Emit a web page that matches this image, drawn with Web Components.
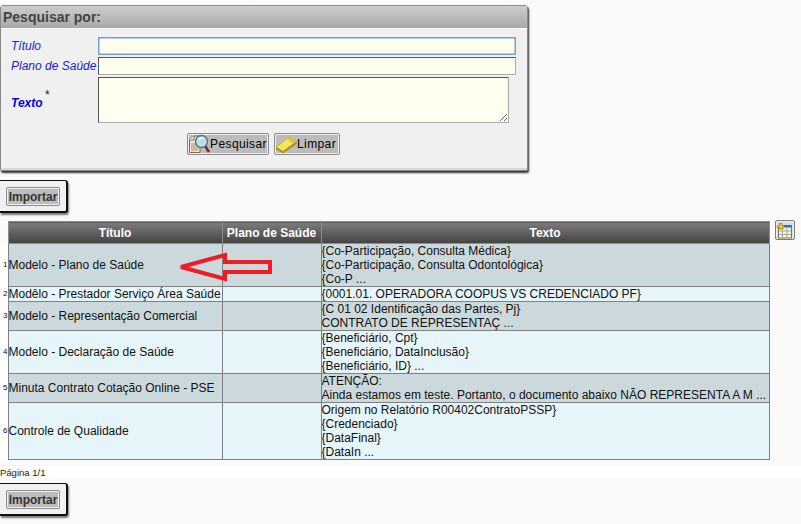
<!DOCTYPE html>
<html lang="pt-BR">
<head>
<meta charset="utf-8">
<title>Pesquisar</title>
<style>
    html, body { margin: 0; background: #fafafa; }
    body { font-family: "Liberation Sans", Arial, sans-serif; font-size: 12px; color: #111; padding-top: 5px; height: 519px; overflow: hidden; }
</style>
</head>
<body>
<search-panel></search-panel>
<import-bar></import-bar>
<results-table></results-table>
<page-info>Página 1/1</page-info>
<import-bar compact></import-bar>

<script>
const ICONS = {
    search: `<svg width="22" height="20" viewBox="0 0 22 20">
        <path d="M1.5 6 L6 2 L12 2 L12 18.5 L1.5 18.5 Z" fill="#f6e8cc" stroke="#7d6a4c"/>
        <path d="M1.5 6 H6 V2" fill="#fff" stroke="#7d6a4c"/>
        <path d="M3 10h8M3 12h8M3 14h8M3 16h7" stroke="#9c8a6c"/>
        <circle cx="13.5" cy="7.5" r="6" fill="#bcdde8" stroke="#587480" stroke-width="1.5"/>
        <path d="M10 6 q2-3 6-2" stroke="#fff" fill="none" stroke-width="1.5"/>
        <path d="M17.5 12.5 L21 18" stroke="#702a1c" stroke-width="2.5"/>
    </svg>`,
    eraser: `<svg width="22" height="20" viewBox="0 0 22 20">
        <path d="M1 13 L15 2.5 L21.5 7.5 L8 17.5 Z" fill="#f7e65a" stroke="#c9ab30"/>
        <path d="M15 2.5 L21.5 7.5 L18 10 L12 5 Z" fill="#d8c24a"/>
        <path d="M1 13 L8 17.5 L21.5 7.5 L21.5 10 L8 19.5 L1 15 Z" fill="#a98f22"/>
    </svg>`,
    columns: `<svg width="17" height="17" viewBox="0 0 17 17">
        <rect x="2.5" y="3.5" width="13" height="12.5" fill="#fbf6e4" stroke="#77735f"/>
        <rect x="8" y="3" width="7" height="2.5" fill="#1d74d2"/>
        <path d="M3 9h12M3 12.5h12M6.5 6v10M11 6v10" stroke="#a8a58f"/>
        <path d="M1.5 3.5 h2 v-2 h2.5 v2 h2 v2 h-1.5 v1.5 h-3 v-1.5 h-2.5 Z" fill="#f0c63a" stroke="#a87f14" stroke-width=".8"/>
    </svg>`
};

class IconButton extends HTMLElement {
    constructor() {
        super();
        this.attachShadow({ mode: 'open' });
        const icon = ICONS[this.getAttribute('icon')] || '';
        const width = this.getAttribute('width');
        this.shadowRoot.innerHTML = `
            <style>
                :host { display: inline-flex; }
                button {
                    display: flex;
                    align-items: center;
                    box-sizing: border-box;
                    width: ${width}px;
                    height: 22px;
                    margin: 0;
                    padding: 0;
                    background: #bcbcbc;
                    border: 1px solid #8c8c8c;
                    border-radius: 2px;
                    box-shadow: inset 0 0 0 1px #efefef;
                    font: 12px "Liberation Sans", Arial, sans-serif;
                    letter-spacing: .4px;
                    color: #000;
                }
                svg { display: block; flex: none; }
            </style>
            <button type="button">${icon}<slot></slot></button>
        `;
    }
}

class SearchPanel extends HTMLElement {
    constructor() {
        super();
        this.attachShadow({ mode: 'open' });
        this.shadowRoot.innerHTML = `
            <style>
                :host {
                    display: block;
                    width: 526px;
                    border: 1px solid #8a8a8a;
                    border-radius: 3px 3px 2px 2px;
                    box-shadow: 1px 2px 2px #333;
                    background: #f0f0f0;
                    font-family: "Liberation Sans", Arial, sans-serif;
                }
                h3 {
                    margin: 0;
                    height: 22px;
                    padding: 0 2px;
                    font-size: 14px;
                    line-height: 22px;
                    color: #444;
                    background: linear-gradient(#cdcdcd, #a8a8a8);
                }
                .body {
                    border-top: 1px solid #fafafa;
                    border-bottom: 2px solid #d6d6d6;
                    padding: 8px 11px 13px 10px;
                    display: grid;
                    grid-template-columns: 87px 418px;
                    row-gap: 2px;
                    align-items: center;
                }
                label {
                    font-size: 12px;
                    font-style: italic;
                    color: #1a1ae0;
                    white-space: nowrap;
                }
                label.req { font-weight: bold; color: #0000e6; position: relative; top: 3px; }
                sup { color: #222; font-style: normal; font-weight: normal; font-size: 12px; line-height: 0; position: relative; top: -3px; left: -1px; }
                input, textarea {
                    box-sizing: border-box;
                    display: block;
                    margin: 0;
                    background: #fffff0;
                    border: 1px solid;
                    border-color: #555 #aaa #aaa #555;
                    outline: none;
                    font: 12px "Liberation Sans", Arial, sans-serif;
                }
                input { width: 418px; height: 18px; padding: 0 2px; }
                input.focus { border: 1px solid #6f9fe0; box-shadow: inset 0 0 0 .5px #6f9fe0; }
                textarea { width: 411px; height: 46px; padding: 2px; resize: both; }
                .actions {
                    grid-column: 1 / -1;
                    display: flex;
                    justify-content: center;
                    gap: 5px;
                    margin-top: 8px;
                }
            </style>
            <h3>Pesquisar por:</h3>
            <div class="body">
                <label>Título</label><input class="focus" type="text">
                <label>Plano de Saúde</label><input type="text">
                <label class="req">Texto <sup>*</sup></label><textarea></textarea>
                <div class="actions">
                    <icon-button icon="search" width="82">Pesquisar</icon-button>
                    <icon-button icon="eraser" width="66">Limpar</icon-button>
                </div>
            </div>
        `;
    }
}

class ImportBar extends HTMLElement {
    constructor() {
        super();
        this.attachShadow({ mode: 'open' });
        this.shadowRoot.innerHTML = `
            <style>
                :host {
                    display: block;
                    box-sizing: border-box;
                    width: 68px;
                    height: 33px;
                    margin: 9px 0 8px;
                    padding: 6px 0 0 6px;
                    background: #f0f0f0;
                    border: 1px solid #111;
                    border-width: 1px 2px 2px 0;
                    border-radius: 0 3px 3px 0;
                    box-shadow: 1px 2px 2px #777;
                }
                :host([compact]) { margin-top: 4px; }
                button {
                    display: block;
                    box-sizing: border-box;
                    width: 54px;
                    height: 19px;
                    margin: 0;
                    padding: 0;
                    background: #bcbcbc;
                    border: 1px solid #8c8c8c;
                    border-radius: 2px;
                    box-shadow: inset 0 0 0 1px #efefef;
                    font: bold 12px "Liberation Sans", Arial, sans-serif;
                    color: #333;
                }
            </style>
            <button type="button">Importar</button>
        `;
    }
}

const ROWS = [
    ['Modelo - Plano de Saúde', '{Co-Participação, Consulta Médica}<br>{Co-Participação, Consulta Odontológica}<br>{Co-P ...'],
    ['Modêlo - Prestador Serviço Área Saúde', '{0001.01. OPERADORA COOPUS VS CREDENCIADO PF}'],
    ['Modelo - Representação Comercial', '{C 01 02 Identificação das Partes, Pj}<br>CONTRATO DE REPRESENTAÇ ...'],
    ['Modelo - Declaração de Saúde', '{Beneficiário, Cpt}<br>{Beneficiário, DataInclusão}<br>{Beneficiário, ID} ...'],
    ['Minuta Contrato Cotação Online - PSE', 'ATENÇÃO:<br>Ainda estamos em teste. Portanto, o documento abaixo NÃO REPRESENTA A M ...'],
    ['Controle de Qualidade', 'Origem no Relatório R00402ContratoPSSP}<br>{Credenciado}<br>{DataFinal}<br>{DataIn ...']
];

class ResultsTable extends HTMLElement {
    constructor() {
        super();
        this.attachShadow({ mode: 'open' });
        const rows = ROWS.map((r, i) => `
            <tr class="${i % 2 ? 'even' : 'odd'}">
                <td class="num">${i + 1}</td>
                <td>${r[0]}</td>
                <td></td>
                <td>${r[1]}</td>
            </tr>`).join('');
        this.shadowRoot.innerHTML = `
            <style>
                :host {
                    display: flex;
                    align-items: flex-start;
                    gap: 5px;
                    position: relative;
                    margin-top: 8px;
                    font-family: "Liberation Sans", Arial, sans-serif;
                }
                table {
                    flex: none;
                    width: 769px;
                    table-layout: fixed;
                    border-collapse: collapse;
                    font-size: 12px;
                    line-height: 14px;
                    color: #111;
                }
                th {
                    height: 21px;
                    padding: 0;
                    border: 1px solid #8c8c8c;
                    background: linear-gradient(#7c7c7c, #434343);
                    color: #fff;
                    font-size: 12px;
                    text-align: center;
                }
                th.blank { background: none; border: 0; }
                td {
                    padding: 0;
                    border: 1px solid #808080;
                    vertical-align: middle;
                    white-space: nowrap;
                    overflow: hidden;
                }
                td.num {
                    padding: 0;
                    border: 0;
                    background: #fff;
                    font-size: 8px;
                    text-align: right;
                }
                tr.odd td:not(.num) { background: #cbd9dc; }
                tr.even td:not(.num) { background: #e6f5fa; }
                .columns {
                    flex: none;
                    box-sizing: border-box;
                    width: 20px;
                    height: 20px;
                    margin-top: -1px;
                    padding: 0;
                    display: flex;
                    align-items: center;
                    justify-content: center;
                    background: #dcdcdc;
                    border: 1px solid #7c7c7c;
                    border-radius: 2px;
                    box-shadow: inset 0 0 0 1px #efefef;
                }
                .arrow { position: absolute; left: 174px; top: 28px; }
            </style>
            <table>
                <colgroup><col style="width:8px"><col style="width:214px"><col style="width:99px"><col style="width:448px"></colgroup>
                <tr><th class="blank"></th><th>Título</th><th>Plano de Saúde</th><th>Texto</th></tr>
                ${rows}
            </table>
            <button class="columns" type="button">${ICONS.columns}</button>
            <svg class="arrow" width="100" height="34" viewBox="0 0 100 34">
                <path d="M7 18 L51 6 L51 13 L96 13 L96 23 L51 23 L51 30 Z" fill="none" stroke="#ee1c25" stroke-width="4" stroke-linejoin="miter" stroke-miterlimit="2"/>
            </svg>
        `;
    }
}

class PageInfo extends HTMLElement {
    constructor() {
        super();
        this.attachShadow({ mode: 'open' });
        this.shadowRoot.innerHTML = `
            <style>
                :host {
                    display: block;
                    height: 13px;
                    margin-top: 6px;
                    background: #fff;
                    font: 9.5px/13px "Liberation Sans", Arial, sans-serif;
                    color: #222;
                }
            </style>
            <slot></slot>
        `;
    }
}

customElements.define('icon-button', IconButton);
customElements.define('search-panel', SearchPanel);
customElements.define('import-bar', ImportBar);
customElements.define('results-table', ResultsTable);
customElements.define('page-info', PageInfo);
</script>
</body>
</html>
